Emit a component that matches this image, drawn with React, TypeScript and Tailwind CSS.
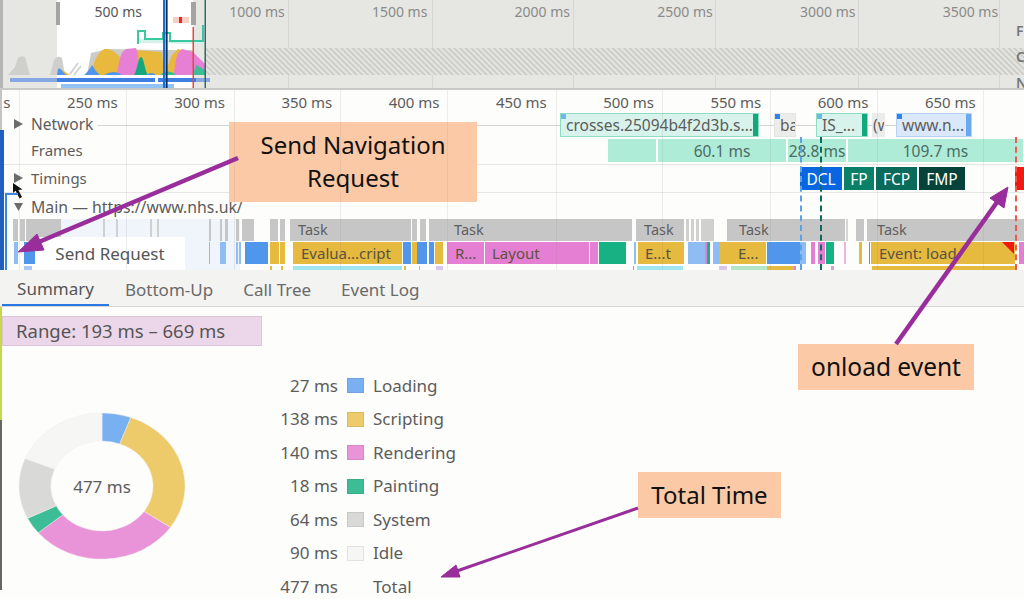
const font = "font-['Noto_Sans',sans-serif]";

type Block = { x: number; w: number; c: string; t?: string; tx?: number };

const rulerLabels = ["s", "250 ms", "300 ms", "350 ms", "400 ms", "450 ms", "500 ms", "550 ms", "600 ms", "650 ms"];
const gridLines = [19, 126, 234, 340, 447, 556, 662, 770, 877, 983];
const overviewLabels = ["500 ms", "1000 ms", "1500 ms", "2000 ms", "2500 ms", "3000 ms", "3500 ms"];
const overviewLines = [288, 432, 573, 715, 858, 999];

const taskBlocks: Block[] = [
  { x: 13, w: 5, c: "#c6c6c6" }, { x: 20, w: 5, c: "#c6c6c6" }, { x: 26, w: 35, c: "#c6c6c6" },
  { x: 103, w: 2, c: "#d0d0d0" }, { x: 116, w: 2, c: "#d0d0d0" }, { x: 150, w: 2, c: "#d0d0d0" },
  { x: 157, w: 2, c: "#d0d0d0" }, { x: 209, w: 2, c: "#c6c6c6" }, { x: 220, w: 2, c: "#c6c6c6" },
  { x: 225, w: 3, c: "#c6c6c6" }, { x: 236, w: 3, c: "#c6c6c6" }, { x: 242, w: 12, c: "#c6c6c6" },
  { x: 270, w: 8, c: "#c6c6c6" }, { x: 280, w: 5, c: "#c6c6c6" },
  { x: 290, w: 121, c: "#c6c6c6", t: "Task", tx: 8 }, { x: 412, w: 5, c: "#c6c6c6" },
  { x: 420, w: 6, c: "#c6c6c6" }, { x: 429, w: 203, c: "#c6c6c6", t: "Task", tx: 25 },
  { x: 636, w: 48, c: "#c6c6c6", t: "Task", tx: 8 }, { x: 686, w: 3, c: "#d0d0d0" },
  { x: 691, w: 3, c: "#d0d0d0" }, { x: 696, w: 3, c: "#d0d0d0" }, { x: 701, w: 13, c: "#d0d0d0" },
  { x: 727, w: 118, c: "#c6c6c6", t: "Task", tx: 12 }, { x: 846, w: 2, c: "#d6d6d6" },
  { x: 856, w: 8, c: "#c6c6c6" }, { x: 867, w: 157, c: "#c6c6c6", t: "Task", tx: 10 },
];

const eventBlocks: Block[] = [
  { x: 14, w: 4, c: "#8fbcf2" }, { x: 24, w: 11, c: "#4f96ec" }, { x: 209, w: 1, c: "#8fbcf2" },
  { x: 220, w: 6, c: "#8fbcf2" }, { x: 236, w: 2, c: "#8fbcf2" }, { x: 239, w: 2, c: "#8fbcf2" },
  { x: 245, w: 23, c: "#4f96ec" }, { x: 270, w: 9, c: "#e6b93f" }, { x: 280, w: 5, c: "#e6b93f" },
  { x: 293, w: 109, c: "#e6b93f", t: "Evalua...cript", tx: 8 }, { x: 403, w: 8, c: "#4f96ec" },
  { x: 412, w: 5, c: "#e6b93f" }, { x: 417, w: 10, c: "#4f96ec" }, { x: 429, w: 5, c: "#4f96ec" },
  { x: 435, w: 8, c: "#e6b93f" }, { x: 447, w: 37, c: "#e57fd3", t: "R...", tx: 8 },
  { x: 485, w: 104, c: "#e57fd3", t: "Layout", tx: 7 }, { x: 590, w: 8, c: "#e57fd3" },
  { x: 599, w: 27, c: "#16b283" }, { x: 634, w: 2, c: "#8fbcf2" },
  { x: 638, w: 46, c: "#e6b93f", t: "E...t", tx: 7 }, { x: 688, w: 17, c: "#8fbcf2" },
  { x: 705, w: 2, c: "#e57fd3" }, { x: 707, w: 3, c: "#16b283" }, { x: 713, w: 6, c: "#8fbcf2" },
  { x: 719, w: 47, c: "#e6b93f", t: "E...", tx: 19 }, { x: 767, w: 33, c: "#4f96ec" },
  { x: 800, w: 6, c: "#8fbcf2" }, { x: 811, w: 4, c: "#e57fd3" }, { x: 818, w: 7, c: "#e57fd3" },
  { x: 826, w: 8, c: "#16b283" }, { x: 844, w: 2, c: "#eeb5e3" }, { x: 859, w: 3, c: "#e6b93f" },
  { x: 869, w: 1, c: "#4f96ec" }, { x: 871, w: 144, c: "#e6b93f", t: "Event: load", tx: 8 },
  { x: 1019, w: 5, c: "#e57fd3" },
];

const subBlocks: Block[] = [
  { x: 24, w: 8, c: "#a9c8f2" }, { x: 270, w: 2, c: "#e6b93f" }, { x: 281, w: 2, c: "#e6b93f" },
  { x: 293, w: 109, c: "#9fe6ee" }, { x: 404, w: 2, c: "#e6b93f" }, { x: 419, w: 1, c: "#e6b93f" },
  { x: 436, w: 7, c: "#d9c6ef" }, { x: 633, w: 1, c: "#e57fd3" }, { x: 637, w: 46, c: "#9fe6ee" },
  { x: 719, w: 8, c: "#d9c6ef" }, { x: 731, w: 36, c: "#b4e6c8" }, { x: 767, w: 27, c: "#e6b93f" },
  { x: 794, w: 2, c: "#e57fd3" }, { x: 831, w: 3, c: "#d9a0cf" }, { x: 872, w: 143, c: "#e6b93f" },
];

const timingBlocks = [
  { t: "DCL", w: 42, c: "#0867e0" },
  { t: "FP", w: 30, c: "#0b8068" },
  { t: "FCP", w: 41, c: "#0a6b5b" },
  { t: "FMP", w: 46, c: "#04423a" },
];

const frameBlocks = [
  { w: 48, t: "" },
  { w: 128, t: "60.1 ms" },
  { w: 58, t: "28.8 ms" },
  { w: 175, t: "109.7 ms" },
];

const networkBlocks = [
  { gap: 0, w: 199, pl: 5, t: "crosses.25094b4f2d3b.s...", bg: "#d8f3eb", bd: "#8fdcc4", end: "#10a87c", cap: "#6cb8e8" },
  { gap: 15, w: 22, pl: 5, t: "ba", bg: "#ececea", bd: "#e4e4e2", end: "", cap: "#2a86ee" },
  { gap: 20, w: 52, pl: 5, t: "IS_...", bg: "#d8f3eb", bd: "#8fdcc4", end: "#10a87c", cap: "#6cb8e8" },
  { gap: 4, w: 13, pl: 0, t: "(w", bg: "#ececea", bd: "#ececea", end: "", cap: "" },
  { gap: 11, w: 76, pl: 5, t: "www.n...", bg: "#dbe8fa", bd: "#b6d2f5", end: "#6aa9ee", cap: "#2a86ee" },
];

const legend = [
  { v: "27 ms", n: "Loading", c: "#79b0f2", d: 27 },
  { v: "138 ms", n: "Scripting", c: "#eecb6a", d: 138 },
  { v: "140 ms", n: "Rendering", c: "#e993d8", d: 140 },
  { v: "18 ms", n: "Painting", c: "#3dbd96", d: 18 },
  { v: "64 ms", n: "System", c: "#d9d9d7", d: 64 },
  { v: "90 ms", n: "Idle", c: "#f6f6f4", d: 90 },
];

function donutSegments() {
  const total = 477;
  const [cx, cy, R, r] = [84, 84, 83, 51];
  let a = 0;
  return legend.map((s) => {
    const start = (a / total) * Math.PI * 2;
    a += s.d;
    const end = (a / total) * Math.PI * 2;
    const p = (rad: number, ang: number) =>
      `${(cx + rad * Math.sin(ang)).toFixed(2)} ${(cy - rad * Math.cos(ang)).toFixed(2)}`;
    const large = end - start > Math.PI ? 1 : 0;
    return {
      c: s.c,
      d: `M${p(R, start)} A${R} ${R} 0 ${large} 1 ${p(R, end)} L${p(r, end)} A${r} ${r} 0 ${large} 0 ${p(r, start)} Z`,
    };
  });
}

function Blocks({ items, textClass }: { items: Block[]; textClass?: string }) {
  return (
    <>
      {items.map((b, i) => (
        <div
          key={i}
          className={`absolute inset-y-0 overflow-hidden whitespace-nowrap ${textClass ?? ""}`}
          style={{ left: b.x, width: b.w, backgroundColor: b.c, paddingLeft: b.tx }}
        >
          {b.t}
        </div>
      ))}
    </>
  );
}

function RowArrow({ open }: { open?: boolean }) {
  return (
    <svg className="mr-[8px] shrink-0" width="9" height="10" viewBox="0 0 9 10">
      <path d={open ? "M0 1 L9 1 L4.5 9 Z" : "M0 0 L9 5 L0 10 Z"} fill="#6b6b6b" />
    </svg>
  );
}

function Overview() {
  return (
    <div className="relative h-[90px] shrink-0 overflow-hidden border-b-2 border-[#c9c9c7] bg-[#e6e6e3]">
      <div className="absolute inset-y-0 left-[57px] w-[136px] bg-white" />
      <div className="absolute inset-y-0 left-0 w-[3px] bg-[#b5b5b3]" />
      {overviewLines.map((x) => (
        <div key={x} className="absolute inset-y-0 w-px bg-[#d6d6d3]" style={{ left: x }} />
      ))}
      <svg className="absolute inset-0" width="1024" height="90" viewBox="0 0 1024 90">
        <defs>
          <pattern id="hatch" width="4" height="4" patternUnits="userSpaceOnUse" patternTransform="rotate(135)">
            <rect width="4" height="4" fill="#e4e4e1" />
            <rect width="1.4" height="4" fill="#c4c4c1" />
          </pattern>
        </defs>
        <rect x="204" y="48" width="820" height="27" fill="url(#hatch)" />
        <path d="M8 75 L15 67 L18 58 Q21 55 25 57 L28 68 L30 75 Z" fill="#cfcfcc" />
        <path d="M50 75 L54 60 Q58 54 62 58 L65 75 Z" fill="#cfcfcc" />
        <path d="M87 75 L91 53 L108 49 L160 50 L192 50 L205 68 L205 75 Z" fill="#cbcbc8" />
        <path d="M70 74 L78 63 M74 75 L81 66" stroke="#d4d4d2" strokeWidth="2" />
        <path d="M92 75 C93 62 96 55 104 49 C112 48 118 54 122 60 L122 75 Z" fill="#e9b93d" />
        <path d="M134 75 L134 50 L162 52 L164 75 Z" fill="#e9b93d" />
        <path d="M164 75 L172 55 L178 49 L190 52 L190 75 Z" fill="#e9b93d" />
        <path d="M57 75 Q59 68 62 70 L70 75 Z" fill="#e9b93d" />
        <path d="M117 75 C119 62 120 52 126 49 L136 48 C139 55 138 65 140 75 Z" fill="#e77fd4" />
        <path d="M174 75 C175 62 176 54 182 49 L193 52 L205 64 L205 75 Z" fill="#e77fd4" />
        <path d="M134 75 C137 72 138 57 141 57 C144 57 145 72 148 75 Z" fill="#14a87c" />
        <path d="M160 75 C164 71 170 70 176 75 Z M193 75 L196 65 L205 70 L205 75 Z" fill="#3dbd96" />
        <path d="M57 75 L58 69 Q60 67 63 72 L66 75 Z M84 75 Q88 72 92 65 Q96 72 100 75 Z M104 75 Q114 69 122 75 Z M146 75 Q152 71 156 75 Z" fill="#4f96ec" />
        <rect x="10" y="78" width="47" height="4" fill="#86a8e2" />
        <rect x="57" y="78" width="98" height="4" fill="#3f7fe2" />
        <rect x="158" y="78" width="38" height="4" fill="#3f7fe2" />
        <rect x="196" y="78" width="14" height="4" fill="#86a8e2" />
        <rect x="61" y="84" width="113" height="4" fill="#93c2f4" />
        <path d="M139 43 L139 39 L145 39 L163 39 L170 41 L203 41 L203 44 Z" fill="#d5f2ea" />
        <path d="M138 44 L138 31 L145 31 L145 39 L163 39 L163 33 L170 33 L170 41 L203 41 L203 25" fill="none" stroke="#39c9a0" strokeWidth="2" />
        <rect x="173" y="17" width="16" height="6" fill="#f9cfc2" />
        <rect x="179" y="17" width="3" height="6" fill="#ea2a1c" />
        <rect x="56" y="2" width="4" height="23" fill="#a4a4a2" />
        <rect x="191" y="2" width="5" height="23" fill="#a4a4a2" />
        <rect x="163" y="0" width="2.5" height="89" fill="#1a6fd8" />
        <rect x="166" y="0" width="1.6" height="89" fill="#0a2f55" />
        <rect x="192.5" y="27" width="1.5" height="62" fill="#e8473a" />
        <rect x="204.5" y="0" width="1.5" height="89" fill="#2f6d66" />
      </svg>
      <div className="relative flex pt-[2px] text-[14px] leading-5 text-[#8a8a88]">
        {overviewLabels.map((l, i) => (
          <span key={l} className={`shrink-0 text-right ${i === 0 ? "w-[142px] text-[#555]" : "w-[142.7px]"}`}>
            {l}
          </span>
        ))}
      </div>
      <div className="absolute left-[1016px] top-[21px] flex h-[72px] flex-col justify-between text-[14px] font-semibold leading-5 text-[#777]">
        <span>F</span>
        <span>C</span>
        <span>N</span>
      </div>
    </div>
  );
}

function Timeline() {
  return (
    <div className="relative h-[180px] shrink-0 overflow-hidden bg-[#fdfdfb] text-[15.5px] leading-5 text-[#5c5c5c]">
      <div className="absolute inset-y-0 left-0 z-20 w-[2px] bg-[#c4c4c2]" />
      <div className="absolute bottom-0 left-0 top-[40px] z-20 w-[4px] bg-[#1f5fbf]" />
      <div className="absolute bottom-0 left-[5px] top-[103px] z-20 w-[13px] border-l-2 border-t-2 border-[#3a86e6]" />
      <div className="absolute bottom-0 left-[60px] top-[129px] w-[180px] bg-[#f0f5fb]" />
      {gridLines.map((x) => (
        <div key={x} className="absolute inset-y-0 z-10 w-px bg-[#80808022]" style={{ left: x }} />
      ))}

      <div className="flex h-[23px] items-center text-[15px]">
        {rulerLabels.map((l, i) => (
          <span key={l} className={`shrink-0 text-right ${i === 0 ? "w-[10.5px]" : "w-[107.25px]"}`}>
            {l}
          </span>
        ))}
      </div>

      <div className="relative flex h-[24px]">
        <div className="absolute inset-x-[98px] top-[12px] h-px bg-[#d4d4d2]" />
        <div className="relative flex w-[560px] shrink-0 items-center pb-[2px] pl-[14px]">
          <RowArrow />
          <span className="bg-[#fdfdfb] pr-1">Network</span>
        </div>
        {networkBlocks.map((n) => (
          <div
            key={n.t}
            className="relative shrink-0 overflow-hidden whitespace-nowrap border leading-[23px]"
            style={{ marginLeft: n.gap, width: n.w, paddingLeft: n.pl, backgroundColor: n.bg, borderColor: n.bd }}
          >
            {n.t}
            {n.end && <div className="absolute inset-y-0 right-0 w-[5px]" style={{ backgroundColor: n.end }} />}
            {n.cap && <div className="absolute left-0 top-0 size-[5px]" style={{ backgroundColor: n.cap }} />}
          </div>
        ))}
      </div>

      <div className="flex h-[28px] border-b border-[#e6e6e4] py-[2px]">
        <div className="flex w-[608px] shrink-0 items-center pb-[2px] pl-[31px] text-[15px]">Frames</div>
        <div className="flex gap-[2px]">
          {frameBlocks.map((f) => (
            <div
              key={f.w}
              className="flex items-center justify-center whitespace-nowrap bg-[#aeecd8] text-[#4c6b62]"
              style={{ width: f.w }}
            >
              {f.t}
            </div>
          ))}
        </div>
      </div>

      <div className="flex h-[28px] border-b border-[#e6e6e4] py-[2px]">
        <div className="flex w-[800px] shrink-0 items-center pb-[2px] pl-[14px] text-[15px]">
          <RowArrow />
          Timings
        </div>
        <div className="flex gap-[2px]">
          {timingBlocks.map((b) => (
            <div
              key={b.t}
              className="flex items-center justify-center text-white"
              style={{ width: b.w, backgroundColor: b.c }}
            >
              {b.t}
            </div>
          ))}
        </div>
        <div className="ml-[50px] w-[9px] bg-[#f21a10]" />
      </div>

      <div className="flex h-[26px] items-center whitespace-nowrap pl-[14px] pt-[2px] text-[15.8px]">
        <RowArrow open />
        Main — https://www.nhs.uk/
      </div>

      <div className="relative h-[22px]">
        <Blocks items={taskBlocks} textClass="leading-[20px] text-[14.5px] text-[#5e5e5e]" />
      </div>
      <div className="relative mt-px h-[22px]">
        <Blocks items={eventBlocks} textClass="leading-[22px] text-[15px] text-[#5a5340]" />
        <div className="absolute left-[1002px] top-0 size-0 border-l-[12px] border-t-[12px] border-l-transparent border-t-[#f0190d]" />
      </div>
      <div className="relative mt-[2px] h-[4px]">
        <Blocks items={subBlocks} />
      </div>

      <div className="absolute left-[800px] top-[47px] z-10 h-[133px] border-l-2 border-dashed border-[#5aa2ea]" />
      <div className="absolute left-[820px] top-[47px] z-10 h-[133px] border-l-2 border-dashed border-[#0c6b5c]" />
      <div className="absolute left-[1015px] top-[47px] z-10 h-[133px] border-l-2 border-dashed border-[#ee5b4c]" />
    </div>
  );
}

function Tabs() {
  const tabs = ["Summary", "Bottom-Up", "Call Tree", "Event Log"];
  return (
    <div className="flex h-[37px] shrink-0 items-stretch border-b border-[#d6d6d4] bg-[#f3f3f1] pl-[2px] text-[17px] text-[#6a6a6a]">
      {tabs.map((t, i) => (
        <div
          key={t}
          className={
            i === 0
              ? "mr-px flex w-[107px] items-center justify-center border-b-2 border-[#2a78e4] pt-[3px] text-[#555]"
              : "flex items-center px-[15px] pt-[3px]"
          }
        >
          {t}
        </div>
      ))}
    </div>
  );
}

function Summary() {
  const segments = donutSegments();
  return (
    <div className="relative flex min-h-0 flex-1 flex-col bg-[#fdfdfb] text-[#5c5c5c]">
      <div className="absolute inset-y-0 left-0 flex w-[2px] flex-col">
        <div className="h-[113px] bg-[#c6d94a]" />
        <div className="h-[170px] bg-[#666]" />
      </div>
      <div className="ml-[2px] mt-[9px] flex h-[30px] w-[260px] items-center border border-[#dcc4d9] bg-[#ecd7ea] pl-[13px] text-[18.5px] text-[#555]">
        Range: 193 ms – 669 ms
      </div>
      <div className="flex">
        <div className="relative ml-[18px] mt-[66px] h-[148px] w-[168px]">
          <svg width="168" height="148" viewBox="0 0 168 168" preserveAspectRatio="none">
            {segments.map((s) => (
              <path key={s.c} d={s.d} fill={s.c} stroke="#efefed" strokeWidth="0.5" />
            ))}
          </svg>
          <span className="absolute inset-x-0 top-[63px] text-center text-[17px] leading-6">477 ms</span>
        </div>
        <div className="ml-[92px] mt-[23px] grid grid-cols-[60px_17px_auto] content-start items-center gap-x-[9px] text-[17px]">
          {legend.map((l) => (
            <div key={l.n} className="contents">
              <span className="h-[33.5px] whitespace-nowrap text-right leading-[33.5px]">{l.v}</span>
              <span className="h-[15px] border border-[#00000014]" style={{ backgroundColor: l.c }} />
              <span className="leading-[33.5px]">{l.n}</span>
            </div>
          ))}
          <span className="h-[33.5px] whitespace-nowrap text-right leading-[33.5px]">477 ms</span>
          <span />
          <span className="leading-[33.5px]">Total</span>
        </div>
      </div>
    </div>
  );
}

export default function App() {
  return (
    <div className={`relative flex h-[599px] w-[1024px] flex-col overflow-hidden bg-[#fdfdfb] ${font}`}>
      <Overview />
      <Timeline />
      <Tabs />
      <Summary />

      {/* tooltip + cursor on the flame chart */}
      <div className="absolute left-[35px] top-[237px] flex h-[33px] w-[150px] items-center justify-center bg-white text-[17px] text-[#555]">
        Send Request
      </div>
      <svg className="absolute left-[13px] top-[183px]" width="11" height="16" viewBox="0 0 11 16">
        <path d="M0 0 L0 10 L2.6 7.8 L6.5 15.5 L9 14 L5.4 7 L9.5 6.5 Z" fill="#111" />
      </svg>

      {/* slide annotations */}
      <div className="absolute left-[229px] top-[122px] flex h-[80px] w-[248px] items-center justify-center bg-[#fcc9a6] pb-[2px] text-center text-[24px] leading-[33px] text-[#111]">
        Send Navigation<br />Request
      </div>
      <div className="absolute left-[798px] top-[344px] flex h-[46px] w-[176px] items-center justify-center bg-[#fcc9a6] text-[24.5px] text-[#111]">
        onload event
      </div>
      <div className="absolute left-[638px] top-[472px] flex h-[46px] w-[143px] items-center justify-center bg-[#fcc9a6] text-[24px] text-[#111]">
        Total Time
      </div>
      <svg className="pointer-events-none absolute inset-0" width="1024" height="599" viewBox="0 0 1024 599">
        <g stroke="#982d9b" fill="#982d9b">
          <path d="M238 158 L34 244" strokeWidth="4.5" fill="none" />
          <path d="M18 252 L37 234 L44 250 Z" strokeWidth="1" />
          <path d="M896 344 L1000 198" strokeWidth="4.5" fill="none" />
          <path d="M1008 187 L1004 208 L990 198 Z" strokeWidth="1" />
          <path d="M638 508 L454 572" strokeWidth="3" fill="none" />
          <path d="M441 577 L456 565 L460 577 Z" strokeWidth="1" />
        </g>
      </svg>
    </div>
  );
}
